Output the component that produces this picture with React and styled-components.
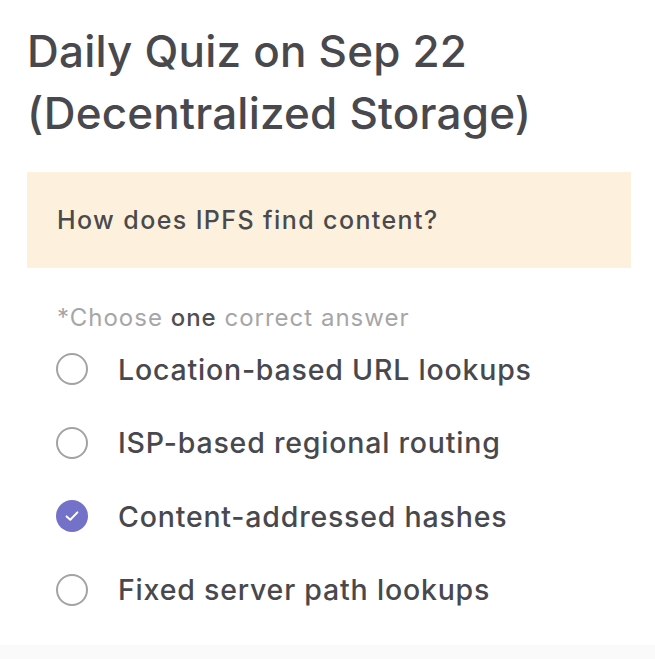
import styled, { createGlobalStyle } from "styled-components";

const Global = createGlobalStyle`
  html, body {
    margin: 0;
    padding: 0;
    background: #ffffff;
  }
  body {
    font-family: Inter, "Noto Sans", "Liberation Sans", sans-serif;
    color: #48484d;
  }
`;

const options = [
  { label: "Location-based URL lookups", checked: false },
  { label: "ISP-based regional routing", checked: false },
  { label: "Content-addressed hashes", checked: true },
  { label: "Fixed server path lookups", checked: false },
];

const App = () => {
  return (
    <S.Page>
      <Global />
      <S.Title>
        Daily Quiz on Sep 22
        <br />
        (Decentralized Storage)
      </S.Title>
      <S.Question>How does IPFS find content?</S.Question>
      <S.Hint>
        *Choose <b>one</b> correct answer
      </S.Hint>
      <S.Options>
        {options.map((o) => (
          <S.Option key={o.label}>
            <S.Radio $checked={o.checked}>
              {o.checked && (
                <svg width="20" height="20" viewBox="0 0 20 20">
                  <path
                    d="M4.6 10.4 L8.3 13.8 L15.4 6.4"
                    fill="none"
                    stroke="#ffffff"
                    strokeWidth="2"
                    strokeLinecap="round"
                    strokeLinejoin="round"
                  />
                </svg>
              )}
            </S.Radio>
            <S.Label>{o.label}</S.Label>
          </S.Option>
        ))}
      </S.Options>
      <S.Footer />
    </S.Page>
  );
};

export default App;

const Page = styled.div`
  width: 655px;
  height: 659px;
  display: flex;
  flex-direction: column;
  box-sizing: border-box;
  padding: 20px 24px 0 27px;
  overflow: hidden;
`;
const Title = styled.h1`
  margin: 0;
  font-size: 44px;
  line-height: 62px;
  font-weight: 500;
  letter-spacing: 0.2px;
  color: #48484d;
`;
const Question = styled.div`
  margin-top: 28px;
  height: 96px;
  display: flex;
  align-items: center;
  padding-left: 30px;
  background: #fdf1dd;
  font-size: 25px;
  font-weight: 500;
  letter-spacing: 1.4px;
  color: #4a4a4c;
`;
const Hint = styled.div`
  margin-top: 35px;
  padding-left: 30px;
  font-size: 24px;
  letter-spacing: 1px;
  color: #a6a6a8;
  b {
    font-weight: 500;
    color: #4f4f52;
  }
`;
const Options = styled.div`
  display: flex;
  flex-direction: column;
  gap: 37.5px;
  margin-top: 19px;
  padding-left: 29px;
`;
const Option = styled.div`
  display: flex;
  align-items: center;
  gap: 30px;
  height: 36px;
`;
const Radio = styled.div`
  width: 32px;
  height: 32px;
  box-sizing: border-box;
  border-radius: 50%;
  border: ${(p) => (p.$checked ? "none" : "2px solid #a3a3a6")};
  background: ${(p) => (p.$checked ? "#7471c9" : "transparent")};
  display: flex;
  align-items: center;
  justify-content: center;
  flex-shrink: 0;
`;
const Label = styled.div`
  font-size: 28.5px;
  font-weight: 500;
  letter-spacing: 0.8px;
  color: #48484d;
`;
const Footer = styled.div`
  margin-top: auto;
  height: 14px;
  margin-left: -27px;
  margin-right: -24px;
  background: #fafafa;
`;

const S = {
  Page,
  Title,
  Question,
  Hint,
  Options,
  Option,
  Radio,
  Label,
  Footer,
};
